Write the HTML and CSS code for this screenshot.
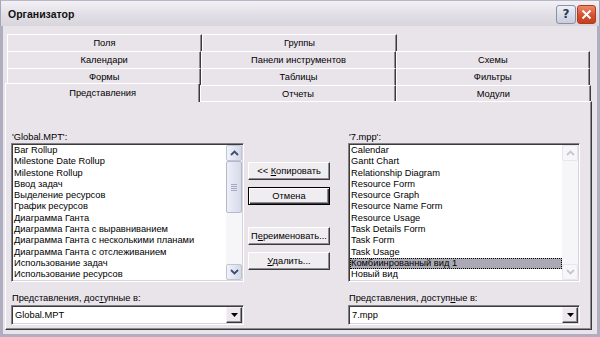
FILE: index.html
```html
<!DOCTYPE html>
<html lang="ru">
  <head>
    <meta charset="utf-8">
    <title>Организатор</title>
    <link rel="stylesheet" href="styles.css">
  </head>
  <body>
    <div class="window">
      <div class="titlebar">
        <span class="title">Организатор</span>
        <div class="caption">
          <span class="cap-btn help">?</span>
          <span class="cap-btn close">
            <svg width="11" height="11" viewBox="0 0 11 11"><path d="M1.5 1.5 L9.5 9.5 M9.5 1.5 L1.5 9.5" stroke="#fff" stroke-width="2"/></svg>
          </span>
        </div>
      </div>
      <div class="frame">
        <div class="tabs">
          <div class="tab-row">
            <div class="tab">Поля</div>
            <div class="tab">Группы</div>
            <div class="tab-empty"></div>
          </div>
          <div class="tab-row">
            <div class="tab">Календари</div>
            <div class="tab">Панели инструментов</div>
            <div class="tab">Схемы</div>
          </div>
          <div class="tab-row">
            <div class="tab">Формы</div>
            <div class="tab">Таблицы</div>
            <div class="tab">Фильтры</div>
          </div>
          <div class="tab-row front">
            <div class="tab selected">Представления</div>
            <div class="tab">Отчеты</div>
            <div class="tab">Модули</div>
          </div>
        </div>

        <div class="panel">
          <div class="organizer">
            <div class="field-label">'Global.MPT':</div>
            <div></div>
            <div class="field-label">'7.mpp':</div>

            <div class="listbox">
              <ul class="items">
                <li>Bar Rollup</li>
                <li>Milestone Date Rollup</li>
                <li>Milestone Rollup</li>
                <li>Ввод задач</li>
                <li>Выделение ресурсов</li>
                <li>График ресурсов</li>
                <li>Диаграмма Ганта</li>
                <li>Диаграмма Ганта с выравниванием</li>
                <li>Диаграмма Ганта с несколькими планами</li>
                <li>Диаграмма Ганта с отслеживанием</li>
                <li>Использование задач</li>
                <li>Использование ресурсов</li>
              </ul>
              <div class="vscroll">
                <div class="sb-btn">
                  <svg width="9" height="6" viewBox="0 0 9 6"><path d="M1 5 L4.5 1.5 L8 5" fill="none" stroke="#3c4e78" stroke-width="1.8"/></svg>
                </div>
                <div class="sb-thumb"><span class="grip"></span></div>
                <div class="sb-track"></div>
                <div class="sb-btn">
                  <svg width="9" height="6" viewBox="0 0 9 6"><path d="M1 1 L4.5 4.5 L8 1" fill="none" stroke="#3c4e78" stroke-width="1.8"/></svg>
                </div>
              </div>
            </div>

            <div class="actions">
              <div class="btn">&lt;&lt; <u>К</u>опировать</div>
              <div class="btn default">Отмена</div>
              <div class="btn gap">П<u>е</u>реименовать...</div>
              <div class="btn"><u>У</u>далить...</div>
            </div>

            <div class="listbox">
              <ul class="items">
                <li>Calendar</li>
                <li>Gantt Chart</li>
                <li>Relationship Diagram</li>
                <li>Resource Form</li>
                <li>Resource Graph</li>
                <li>Resource Name Form</li>
                <li>Resource Usage</li>
                <li>Task Details Form</li>
                <li>Task Form</li>
                <li>Task Usage</li>
                <li class="sel">Комбиинрованный вид 1</li>
                <li>Новый вид</li>
              </ul>
              <div class="vscroll">
                <div class="sb-btn disabled">
                  <svg width="9" height="6" viewBox="0 0 9 6"><path d="M1 5 L4.5 1.5 L8 5" fill="none" stroke="#c5c8d3" stroke-width="1.8"/></svg>
                </div>
                <div class="sb-track"></div>
                <div class="sb-btn disabled">
                  <svg width="9" height="6" viewBox="0 0 9 6"><path d="M1 1 L4.5 4.5 L8 1" fill="none" stroke="#c5c8d3" stroke-width="1.8"/></svg>
                </div>
              </div>
            </div>

            <div class="field-label bottom">Представления, дос<u>т</u>упные в:</div>
            <div></div>
            <div class="field-label bottom">Представления, доступ<u>н</u>ые в:</div>

            <div class="combo">
              <span class="combo-text">Global.MPT</span>
              <span class="drop"><svg width="7" height="4" viewBox="0 0 7 4"><path d="M0 0 H7 L3.5 4 Z" fill="#000"/></svg></span>
            </div>
            <div></div>
            <div class="combo">
              <span class="combo-text">7.mpp</span>
              <span class="drop"><svg width="7" height="4" viewBox="0 0 7 4"><path d="M0 0 H7 L3.5 4 Z" fill="#000"/></svg></span>
            </div>
          </div>
        </div>
      </div>
    </div>
  </body>
</html>
```

FILE: styles.css
```css
*, *::before, *::after {
  box-sizing: border-box;
}

html, body {
  margin: 0;
  padding: 0;
}

body {
  width: 600px;
  height: 337px;
  overflow: hidden;
  font-family: "Liberation Sans", Arial, sans-serif;
  font-size: 9.3px;
  color: #000;
  background: #e9e4ea;
}

ul {
  list-style: none;
  margin: 0;
  padding: 0;
}

u {
  text-decoration: underline;
  text-underline-offset: 1px;
}

.window {
  width: 600px;
  height: 337px;
  display: flex;
  flex-direction: column;
  background: #e9e4ea;
}

/* title bar */
.titlebar {
  height: 26px;
  flex-shrink: 0;
  display: flex;
  align-items: center;
  justify-content: space-between;
  padding: 0 3px 0 7px;
  background: linear-gradient(#f3f1f5, #e2dee6 55%, #d9d5dd);
  border-left: 1px solid #a6a5b8;
  border-right: 1px solid #a6a5b8;
  border-top: 1px solid #b8b7c8;
}

.title {
  font-size: 10.5px;
  font-weight: bold;
  color: #111;
}

.caption {
  display: flex;
  gap: 1px;
  margin-top: 1px;
}

.cap-btn {
  width: 20px;
  height: 19px;
  border-radius: 3px;
  display: flex;
  align-items: center;
  justify-content: center;
}

.help {
  border: 1px solid #8a90a8;
  background: linear-gradient(#eef0f6, #c9cedd);
  color: #2d3a5e;
  font-family: "DejaVu Sans", sans-serif;
  font-size: 12px;
  font-weight: bold;
}

.close {
  width: 19px;
  border: 1px solid #b03a22;
  background: linear-gradient(#ec8a6e, #d4502e 55%, #c4401f);
}

/* frame + tabs */
.frame {
  flex: 1;
  display: flex;
  flex-direction: column;
  border: 3px solid #afaec0;
  border-top: 0;
  padding: 8px 5px 4px 2px;
}

.tabs {
  height: 67px;
  flex-shrink: 0;
  display: flex;
  flex-direction: column;
}

.tab-row {
  height: 17px;
  display: flex;
  margin: 0 2px 0 2px;
}

.tab-row.front {
  height: 16px;
  margin: 0 1px 0 2px;
}

.tab {
  flex: 1;
  text-align: center;
  line-height: 16px;
  white-space: nowrap;
  background: #e9e4ea;
  border-top: 1px solid #fff;
  border-left: 1px solid #fff;
  border-right: 1px solid #3a3a3a;
  box-shadow: inset -1px 0 #8d8b94;
}

.tab-empty {
  flex: 1;
}

.tab.selected {
  position: relative;
  z-index: 1;
  margin: -2px 0 -1px -2px;
  line-height: 18px;
}

.panel {
  flex: 1;
  border-top: 1px solid #fff;
  border-left: 1px solid #fff;
  border-right: 1px solid #3a3a3a;
  border-bottom: 1px solid #3a3a3a;
  box-shadow: inset -1px -1px #8d8b94;
  padding: 29px 11px 4px 5px;
}

.organizer {
  display: grid;
  grid-template-columns: 233px 104px 232px;
  grid-template-rows: 12px 139px 23px 20px;
}

.field-label {
  line-height: 12px;
  padding-left: 1px;
  white-space: nowrap;
}

.field-label.bottom {
  align-self: end;
  padding-bottom: 1px;
}

/* list boxes */
.listbox {
  display: flex;
  background: #fff;
  border: 1px solid;
  border-color: #828088 #fff #fff #828088;
  box-shadow: inset 1px 1px #3c3c3c, inset -1px -1px #d8d4da;
  padding: 1px;
}

.items {
  flex: 1;
  overflow: hidden;
}

.items li {
  height: 11.3px;
  line-height: 11.3px;
  padding-left: 1px;
  white-space: nowrap;
}

.items li.sel {
  background: #abaab4;
  outline: 1px dotted #000;
  outline-offset: -1px;
}

.vscroll {
  width: 16px;
  display: flex;
  flex-direction: column;
  background: #f6f6f8;
}

.sb-btn {
  height: 16px;
  flex-shrink: 0;
  display: flex;
  align-items: center;
  justify-content: center;
  border: 1px solid #bfc4d6;
  border-radius: 2px;
  background: linear-gradient(90deg, #f2f3f9, #d4d8e7);
}

.sb-btn.disabled {
  border-color: #e6e6ec;
  background: #f7f7f9;
}

.sb-thumb {
  height: 52px;
  flex-shrink: 0;
  display: flex;
  align-items: center;
  justify-content: center;
  border: 1px solid #b5b9cd;
  border-radius: 2px;
  background: linear-gradient(90deg, #eef0f8, #d6dae9);
}

.grip {
  width: 6px;
  height: 7px;
  background: repeating-linear-gradient(#a4a9bf 0 1px, transparent 1px 2px);
}

.sb-track {
  flex: 1;
}

/* buttons */
.actions {
  display: flex;
  flex-direction: column;
  padding: 19px 0 0 4px;
}

.btn {
  width: 82px;
  height: 18px;
  text-align: center;
  line-height: 16px;
  white-space: nowrap;
  background: #f0edf1;
  border: 1px solid;
  border-color: #fff #3a3a3a #3a3a3a #fff;
  box-shadow: inset -1px -1px #8d8b94;
}

.btn + .btn {
  margin-top: 7px;
}

.btn.gap {
  margin-top: 22px;
}

.btn.default {
  border-color: #000;
  box-shadow: inset 1px 1px #fff, inset -1px -1px #3a3a3a, inset -2px -2px #8d8b94;
}

/* combos */
.combo {
  display: flex;
  align-items: stretch;
  background: #fff;
  border: 1px solid;
  border-color: #828088 #fff #fff #828088;
  box-shadow: inset 1px 1px #3c3c3c, inset -1px -1px #d8d4da;
  padding: 1px;
}

.combo-text {
  flex: 1;
  line-height: 16px;
  padding-left: 2px;
}

.drop {
  width: 16px;
  display: flex;
  align-items: center;
  justify-content: center;
  background: #ece8ed;
  border: 1px solid;
  border-color: #f4f2f5 #3a3a3a #3a3a3a #f4f2f5;
  box-shadow: inset -1px -1px #8d8b94;
}
```
